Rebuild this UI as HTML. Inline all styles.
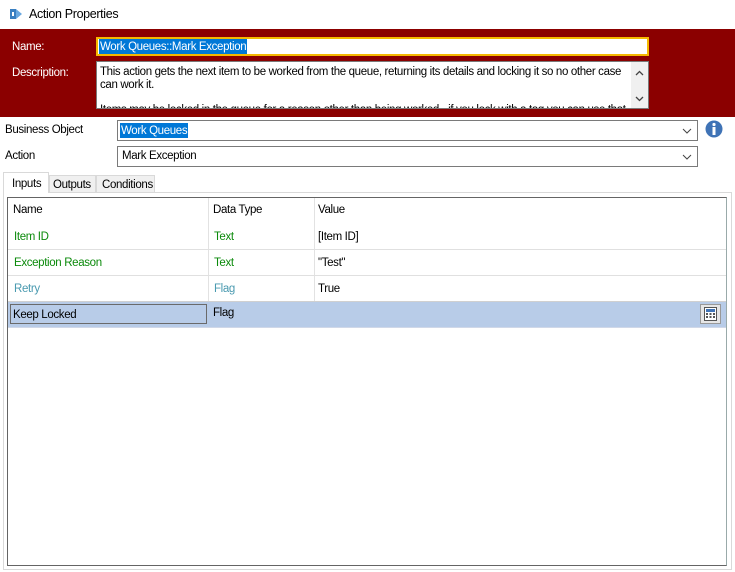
<!DOCTYPE html>
<html><head><style>
*{box-sizing:border-box;margin:0;padding:0}
body{width:735px;height:572px;background:#fff;font-family:"Liberation Sans",sans-serif;font-size:11.5px;letter-spacing:-0.35px;color:#000;position:relative;overflow:hidden}
.a{position:absolute}
.t{white-space:nowrap}
</style></head><body>
<svg class="a" style="left:9px;top:7px" width="14" height="14" viewBox="0 0 14 14"><rect x="1" y="2" width="6" height="10" fill="#3a7fc1"/><path d="M7 2 L13 7 L7 12Z" fill="#6aa8e0"/><rect x="3" y="5" width="2" height="4" fill="#fff"/></svg>
<div class="a t" style="left:29px;top:7px;font-size:12.5px">Action Properties</div>
<div class="a" style="left:0;top:29px;width:735px;height:88px;background:#8b0000"></div>
<div class="a t" style="left:12px;top:41px;color:#fff">Name:</div>
<div class="a t" style="left:12px;top:67px;color:#fff">Description:</div>
<div class="a" style="left:96px;top:37px;width:553px;height:19px;border:2px solid #f5b800;background:#fff"></div>
<div class="a t" style="left:99px;top:39px;height:15px;padding:0 1px;background:#0078d7;color:#fff;line-height:16px">Work Queues::Mark Exception</div>
<div class="a" style="left:96px;top:61px;width:553px;height:48px;border:1px solid #7a7a7a;background:#fff;overflow:hidden">
<div style="position:absolute;left:3px;top:4px;width:528px;line-height:13px">This action gets the next item to be worked from the queue, returning its details and locking it so no other case can work it.</div>
<div class="t" style="position:absolute;left:3px;top:42px">Items may be locked in the queue for a reason other than being worked - if you lock with a tag you can use that.</div>
<div style="position:absolute;right:0;top:0;width:17px;height:46px;background:#f0f0f0"></div>
<svg style="position:absolute;right:4px;top:8px" width="9" height="6"><path d="M1 5L4.5 1.5L8 5" stroke="#444" fill="none" stroke-width="1.3"/></svg>
<svg style="position:absolute;right:4px;top:34px" width="9" height="6"><path d="M1 1L4.5 4.5L8 1" stroke="#444" fill="none" stroke-width="1.3"/></svg>
</div>
<div class="a t" style="left:5px;top:124px">Business Object</div>
<div class="a t" style="left:5px;top:150px">Action</div>
<div class="a" style="left:117px;top:120px;width:581px;height:21px;border:1px solid #7a7a7a"></div>
<div class="a t" style="left:120px;top:123px;height:15px;line-height:16px;padding:0 1px;background:#0078d7;color:#fff">Work Queues</div>
<div class="a" style="left:117px;top:146px;width:581px;height:21px;border:1px solid #7a7a7a"></div>
<div class="a t" style="left:122px;top:150px">Mark Exception</div>
<svg class="a" style="left:682px;top:128px" width="10" height="6"><path d="M1 1L5 5L9 1" stroke="#444" fill="none"/></svg>
<svg class="a" style="left:682px;top:154px" width="10" height="6"><path d="M1 1L5 5L9 1" stroke="#444" fill="none"/></svg>
<svg class="a" style="left:705px;top:120px" width="18" height="18"><circle cx="9" cy="9" r="8.5" fill="#3f73b6"/><circle cx="9" cy="4.5" r="1.6" fill="#fff"/><rect x="7.5" y="7" width="3" height="8" fill="#fff"/></svg>
<div class="a" style="left:3px;top:192px;width:729px;height:378px;border:1px solid #d9d9d9;background:#fff"></div>
<div class="a t" style="left:3px;top:172px;width:46px;height:21px;border:1px solid #d9d9d9;border-bottom:none;background:#fff;padding:5px 0 0 8px;font-size:11.5px">Inputs</div>
<div class="a t" style="left:49px;top:175px;width:47px;height:18px;border:1px solid #d9d9d9;background:#f0f0f0;padding:3px 0 0 3px;font-size:11.5px">Outputs</div>
<div class="a t" style="left:96px;top:175px;width:59px;height:18px;border:1px solid #d9d9d9;background:#f0f0f0;padding:3px 0 0 5px;font-size:11.5px">Conditions</div>
<div class="a" style="left:7px;top:197px;width:720px;height:369px;border:1px solid #646464;border-right-color:#9aa;background:#fff"></div>
<div class="a" style="left:208px;top:198px;width:1px;height:104px;background:#e2e2e2"></div>
<div class="a" style="left:314px;top:198px;width:1px;height:130px;background:#e2e2e2"></div>
<div class="a" style="left:8px;top:249px;width:718px;height:1px;background:#e0e0e0"></div>
<div class="a" style="left:8px;top:275px;width:718px;height:1px;background:#e0e0e0"></div>
<div class="a" style="left:8px;top:301px;width:718px;height:1px;background:#d0d0d0"></div>
<div class="a" style="left:8px;top:302px;width:718px;height:25px;background:#b8cce8"></div>
<div class="a" style="left:8px;top:327px;width:718px;height:1px;background:#d0d8e8"></div>
<div class="a" style="left:10px;top:304px;width:197px;height:20px;border:1px solid #6a6a6a;background:#b8cce8"></div>
<div class="a t" style="left:13px;top:204px">Name</div>
<div class="a t" style="left:213px;top:204px">Data Type</div>
<div class="a t" style="left:318px;top:204px">Value</div>
<div class="a t" style="left:14px;top:231px;color:#0b8a0b">Item ID</div>
<div class="a t" style="left:214px;top:231px;color:#0b8a0b">Text</div>
<div class="a t" style="left:318px;top:231px">[Item ID]</div>
<div class="a t" style="left:14px;top:257px;color:#0b8a0b">Exception Reason</div>
<div class="a t" style="left:214px;top:257px;color:#0b8a0b">Text</div>
<div class="a t" style="left:318px;top:257px">"Test"</div>
<div class="a t" style="left:14px;top:283px;color:#4a9ab0">Retry</div>
<div class="a t" style="left:214px;top:283px;color:#4a9ab0">Flag</div>
<div class="a t" style="left:318px;top:283px">True</div>
<div class="a t" style="left:13px;top:309px">Keep Locked</div>
<div class="a t" style="left:213px;top:307px">Flag</div>
<div class="a" style="left:700px;top:304px;width:21px;height:20px;border:1px solid #999;background:#e6e6e6"></div>
<svg class="a" style="left:704px;top:307px" width="13" height="14"><rect x="0.5" y="0.5" width="12" height="13" fill="#fff" stroke="#555"/><rect x="2" y="2" width="9" height="3" fill="#3f73b6"/><g fill="#555"><rect x="2" y="6" width="2" height="2"/><rect x="5.5" y="6" width="2" height="2"/><rect x="9" y="6" width="2" height="2"/><rect x="2" y="9" width="2" height="2"/><rect x="5.5" y="9" width="2" height="2"/><rect x="9" y="9" width="2" height="2"/></g></svg>
</body></html>
